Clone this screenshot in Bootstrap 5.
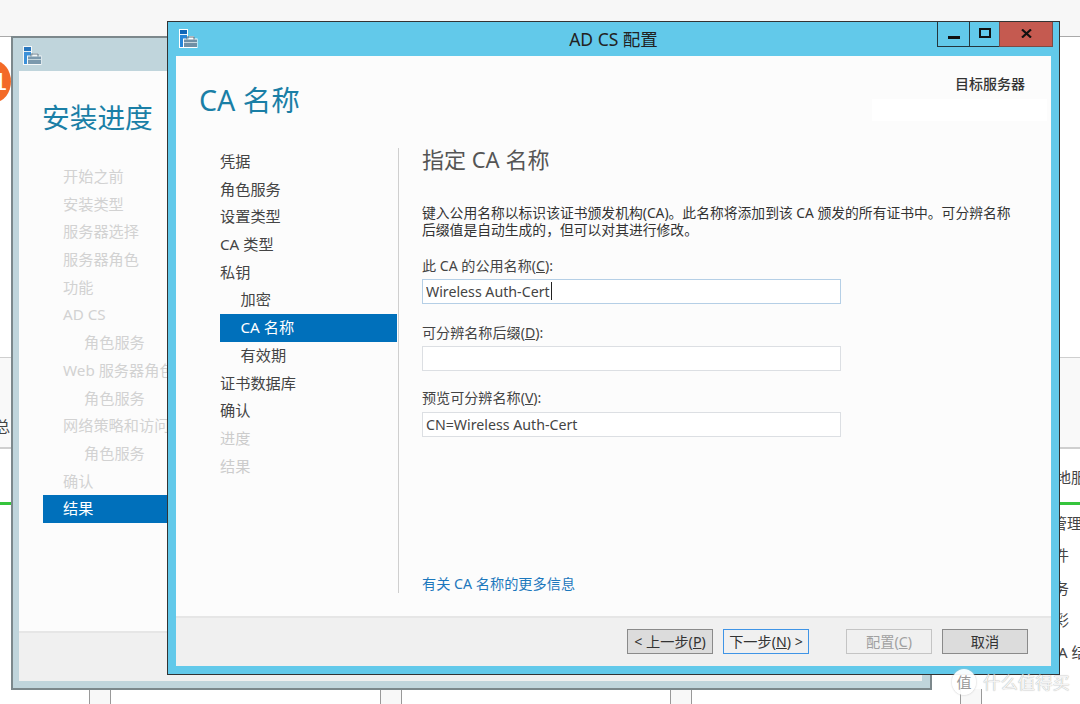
<!DOCTYPE html>
<html lang="zh-CN"><head><meta charset="utf-8"><title>AD CS 配置</title>
<link href="https://cdn.jsdelivr.net/npm/bootstrap@5.3.0/dist/css/bootstrap.min.css" rel="stylesheet">
<style>
html,body{margin:0;height:704px;overflow:hidden}
body{background:#fff;font-family:"Noto Sans","Noto Sans CJK SC",sans-serif;color:#444;position:relative;width:1080px}
.desk-top{height:37px;background:#f7f7f7;border-bottom:1px solid #a9a9a9}
.desk-band{position:absolute;left:0;right:0;top:357px;height:92px;background:#f9f9f9;border-top:1px solid #cfcfcf;border-bottom:2px solid #cfcfcf}
.desk-green{position:absolute;left:0;right:0;top:502px;height:3px;background:#35c43c}
.desk-cell{position:absolute;top:689px;bottom:0;width:22px;background:#f8f8f8;border-left:1px solid #999;border-right:1px solid #999}
.desk-txt{position:absolute;font-size:15px;line-height:20px;color:#444;white-space:nowrap}
.notif{position:absolute;left:-21px;top:61px;width:32px;height:41px;border-radius:50%;background:#f36a27;color:#fff;font-size:24px;line-height:41px;text-align:right;padding-right:4px;font-family:"Liberation Sans",sans-serif}
.win{position:absolute;display:flex;flex-direction:column;border:1px solid #333}
.win-main{left:167px;top:21px;width:893px;height:654px;background:#62c9ea}
.win-back{left:11px;top:36px;width:921px;height:654px;background:#c0d5dc;border-color:#7c888c;border-width:2px}
.cap{height:34px;flex:none;display:flex;align-items:flex-start;position:relative}
.win-back .cap{height:33px}
.cap svg{margin:7px 0 0 11px}
.win-back .cap svg{margin:8px 0 0 10px;opacity:.85}
.cap-title{position:absolute;left:0;right:0;top:5px;text-align:center;font-size:17.5px;line-height:24px;color:#222}
.cap-btns{position:absolute;right:6px;top:0;display:flex;height:25px}
.cap-btn{display:flex;align-items:center;justify-content:center;border:1px solid #24363d;border-top:0;height:25px;width:33px;margin-left:-1px}
.cap-btn.btn-x{width:54px;background:#c55a50;border-color:#7d4a45}
.client{flex:1;margin:0 8px 8px;background:#fcfcfc;display:flex;flex-direction:column;min-height:0}
.win-back .client{margin:0 8px 7px 6px}
.wiz-head{height:92px;flex:none;display:flex;justify-content:space-between;position:relative}
.wiz-h1{font-size:28.6px;line-height:40px;font-weight:400;color:#1a7fa6;margin:24px 0 0 23px}
.win-back .wiz-h1{font-size:27.7px;margin:26px 0 0 23px}
.target{position:absolute;right:26px;top:18px;font-size:14px;line-height:20px;font-weight:500;color:#333}
.target-box{position:absolute;right:4px;top:43px;width:175px;height:22px;background:#fff}
.wiz-body{flex:1;display:flex;min-height:0}
.steps{width:221px;flex:none;padding-left:44px}
.steps-back{width:100%;padding-left:24px}
.step{height:27.7px;line-height:27.7px;font-size:15.2px;color:#444;white-space:nowrap}
.step.sub{padding-left:20.5px}
.step.off{color:#ccc}
.step.on{background:#0070bb;color:#fff}
.steps-back .step{padding-left:20px;color:#d2d2d2}
.steps-back .step.sub{padding-left:41px}
.steps-back .step.on{color:#fff}
.pane{width:630px;flex:none;margin-left:1px;border-left:1px solid #cfcfcf;padding-left:23px;margin-bottom:23px;display:flex;flex-direction:column}
.pane-h{font-size:22px;line-height:28px;font-weight:400;color:#555;margin:-3px 0 0}
.pane-p{font-size:13.8px;line-height:17px;color:#333;margin:31px 0 0;white-space:nowrap}
.fld-l{display:block;font-size:14.1px;line-height:18px;color:#444;margin:0 0 4px}
.fld{position:relative;width:419px;margin-bottom:20px}
.form-control.fld-i{height:25px;border-radius:0;padding:0 3px;font-size:14.2px;line-height:23px;color:#444;background:#fff;border:1px solid #dcdfe3;font-family:inherit}
.form-control.fld-i.act{border-color:#b5cfe6}
.caret-bar{position:absolute;left:129px;top:25px;width:1px;height:18px;background:#222}
.more{margin-top:auto;font-size:14.2px;line-height:18px;color:#1c78bd;text-decoration:none}
.wiz-foot{flex:none;height:50px;background:#f0f0f0;border-top:2px solid #e6e6e6;display:flex;align-items:flex-start;padding:11px 0 0 451px}
.wbtn.btn{width:86px;height:25px;padding:0;border-radius:0;font-size:14.2px;line-height:23px;color:#333;background:#dcdcdc;border:1px solid #8a8a8a;margin-right:10px;white-space:nowrap}
.wbtn.btn.nx{background:#f0f0f0;border-color:#3f94e6}
.wbtn.btn.dis{background:#f0f0f0;border-color:#c4c4c4;color:#a0a0a0;opacity:1;margin-left:27px}
.mark-c{position:absolute;left:952px;top:669px;width:24px;height:26px;border-radius:50%;background:#fffffff0;box-shadow:0 0 2px #bbb;color:#999;font-size:15px;line-height:26px;text-align:center}
.mark-t{position:absolute;left:983px;top:670px;font-size:17.4px;line-height:24px;color:#f4f4f4;white-space:nowrap;text-shadow:0 0 1px #999}
</style></head>
<body>
<div class="desk-top"></div>
<div class="desk-band"></div>
<div class="desk-green"></div>
<div class="desk-cell" style="left:89px"></div>
<div class="desk-cell" style="left:380px"></div>
<div class="desk-cell" style="left:670px"></div>
<div class="desk-cell" style="left:960px"></div>
<div class="notif">1</div>
<div class="desk-txt" style="left:-5px;top:416px">总</div>
<div class="desk-txt" style="left:1056px;top:467px">地服</div>
<div class="desk-txt" style="left:1052px;top:513px">管理</div>
<div class="desk-txt" style="left:1054px;top:545px">件</div>
<div class="desk-txt" style="left:1054px;top:578px">务</div>
<div class="desk-txt" style="left:1054px;top:610px">彩</div>
<div class="desk-txt" style="left:1058px;top:642px">A 结</div>

<div class="win win-back">
  <div class="cap"><svg width="19" height="19" viewBox="0 0 19 19"><rect x="0" y="0" width="9" height="19" fill="#fff"/><rect x="1" y="1" width="7" height="17" fill="#2585d8"/><rect x="1" y="1" width="7" height="4" fill="#0f66b8"/><rect x="1" y="5" width="7" height="1" fill="#e8f2fa"/><path d="M7 9.500h3V7h5v2.500h3.500V19H4V9.500z" fill="#fff"/><rect x="5" y="10.500" width="13" height="7.500" fill="#6f8fa5"/><path d="M8 10.500V8h7v2.500" fill="none" stroke="#5a6f7d"/><rect x="5" y="13" width="13" height="1" fill="#c5d5dd"/></svg></div>
  <div class="client">
    <div class="wiz-head"><h1 class="wiz-h1">安装进度</h1></div>
    <div class="wiz-body" style="height:468px">
      <div class="steps steps-back">
        <div class="step">开始之前</div><div class="step">安装类型</div><div class="step">服务器选择</div><div class="step">服务器角色</div><div class="step">功能</div><div class="step">AD CS</div><div class="step sub">角色服务</div><div class="step">Web 服务器角色(IIS)</div><div class="step sub">角色服务</div><div class="step">网络策略和访问服务</div><div class="step sub">角色服务</div><div class="step">确认</div><div class="step on">结果</div>
      </div>
    </div>
    <div class="wiz-foot"></div>
  </div>
</div>

<div class="win win-main">
  <div class="cap">
    <svg width="19" height="19" viewBox="0 0 19 19"><rect x="0" y="0" width="9" height="19" fill="#fff"/><rect x="1" y="1" width="7" height="17" fill="#2585d8"/><rect x="1" y="1" width="7" height="4" fill="#0f66b8"/><rect x="1" y="5" width="7" height="1" fill="#e8f2fa"/><path d="M7 9.500h3V7h5v2.500h3.500V19H4V9.500z" fill="#fff"/><rect x="5" y="10.500" width="13" height="7.500" fill="#6f8fa5"/><path d="M8 10.500V8h7v2.500" fill="none" stroke="#5a6f7d"/><rect x="5" y="13" width="13" height="1" fill="#c5d5dd"/></svg>
    <div class="cap-title">AD CS 配置</div>
    <div class="cap-btns">
      <div class="cap-btn"><svg style="margin:8px 0 0" width="12" height="4" viewBox="0 0 12 4"><rect width="12" height="3" fill="#111"/></svg></div>
      <div class="cap-btn" style="width:31px"><svg style="margin:0 0 3px" width="12" height="10" viewBox="0 0 12 10"><rect x="1" y="1" width="10" height="8" fill="none" stroke="#111" stroke-width="2"/></svg></div>
      <div class="cap-btn btn-x"><svg style="margin:0 0 1px" width="11" height="9" viewBox="0 0 11 9"><path d="M1 .5 10 8.500M10 .5 1 8.500" stroke="#111" stroke-width="2.200"/></svg></div>
    </div>
  </div>
  <div class="client">
    <div class="wiz-head">
      <h1 class="wiz-h1">CA 名称</h1>
      <div class="target">目标服务器</div>
      <div class="target-box"></div>
    </div>
    <div class="wiz-body">
      <div class="steps">
        <div class="step">凭据</div><div class="step">角色服务</div><div class="step">设置类型</div><div class="step">CA 类型</div><div class="step">私钥</div><div class="step sub">加密</div><div class="step sub on">CA 名称</div><div class="step sub">有效期</div><div class="step">证书数据库</div><div class="step">确认</div><div class="step off">进度</div><div class="step off">结果</div>
      </div>
      <div class="pane">
        <h2 class="pane-h">指定 CA 名称</h2>
        <p class="pane-p">键入公用名称以标识该证书颁发机构(CA)。此名称将添加到该 CA 颁发的所有证书中。可分辨名称<br>后缀值是自动生成的，但可以对其进行修改。</p>
        <div class="fld" style="margin-top:19px"><label class="fld-l">此 CA 的公用名称(<u>C</u>):</label><input class="form-control fld-i act" value="Wireless Auth-Cert" readonly><span class="caret-bar"></span></div>
        <div class="fld"><label class="fld-l">可分辨名称后缀(<u>D</u>):</label><input class="form-control fld-i" readonly></div>
        <div class="fld" style="margin-top:-2px"><label class="fld-l" style="margin-bottom:5px">预览可分辨名称(<u>V</u>):</label><input class="form-control fld-i" value="CN=Wireless Auth-Cert" readonly></div>
        <a class="more" href="#">有关 CA 名称的更多信息</a>
      </div>
    </div>
    <div class="wiz-foot">
      <button class="btn wbtn" type="button">&lt; 上一步(<u>P</u>)</button>
      <button class="btn wbtn nx" type="button">下一步(<u>N</u>) &gt;</button>
      <button class="btn wbtn dis" type="button" disabled>配置(<u>C</u>)</button>
      <button class="btn wbtn" type="button">取消</button>
    </div>
  </div>
</div>
<div class="mark-c">值</div>
<div class="mark-t">什么值得买</div>
<script src="https://cdn.jsdelivr.net/npm/bootstrap@5.3.0/dist/js/bootstrap.bundle.min.js"></script>
</body></html>
